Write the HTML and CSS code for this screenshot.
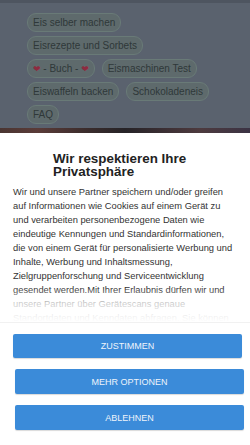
FILE: index.html
```html
<!DOCTYPE html>
<html lang="de">
<head>
<meta charset="utf-8">
<title>Eis</title>
<link rel="stylesheet" href="styles.css">
</head>
<body>
<div class="topband"></div>
<nav class="tags">
  <span class="tag">Eis selber machen</span>
  <span class="tag">Eisrezepte und Sorbets</span>
  <span class="tag"><span class="heart">❤</span> - Buch - <span class="heart">❤</span></span>
  <span class="tag">Eismaschinen Test</span>
  <span class="tag">Eiswaffeln backen</span>
  <span class="tag">Schokoladeneis</span>
  <span class="tag">FAQ</span>
</nav>
<div class="strip"></div>
<section class="dialog">
  <h1 class="title">Wir respektieren Ihre Privatsphäre</h1>
  <div class="scroll">
    <p class="text">Wir und unsere Partner speichern und/oder greifen auf Informationen wie Cookies auf einem Gerät zu und verarbeiten personenbezogene Daten wie eindeutige Kennungen und Standardinformationen, die von einem Gerät für personalisierte Werbung und Inhalte, Werbung und Inhaltsmessung, Zielgruppenforschung und Serviceentwicklung gesendet werden.Mit Ihrer Erlaubnis dürfen wir und unsere Partner über Gerätescans genaue Standortdaten und Kenndaten abfragen. Sie können Ihre Einwilligung jederzeit widerrufen.</p>
    <div class="fade"></div>
  </div>
  <div class="actions">
    <button class="btn btn-first">ZUSTIMMEN</button>
    <button class="btn">MEHR OPTIONEN</button>
    <button class="btn">ABLEHNEN</button>
  </div>
</section>
</body>
</html>
```
FILE: styles.css
```css
html, body {
  margin: 0;
  padding: 0;
}
body {
  background: #5a626e;
  font-family: "Liberation Sans", Arial, sans-serif;
  width: 250px;
  height: 445px;
  overflow: hidden;
}
.topband {
  height: 3px;
  background: #4e5560;
}
.tags {
  display: flex;
  flex-wrap: wrap;
  column-gap: 7px;
  row-gap: 4px;
  padding: 10px 38px 0 27px;
  height: 125px;
  box-sizing: border-box;
  align-content: flex-start;
}
.tag {
  display: inline-block;
  height: 19px;
  line-height: 17px;
  box-sizing: border-box;
  padding: 0 5px;
  border: 1px solid #697a77;
  border-radius: 9px;
  background: #5e6a6c;
  color: #2f3839;
  font-size: 10px;
  white-space: nowrap;
}
.heart {
  color: #8e2b3f;
  font-family: "DejaVu Sans", sans-serif;
  font-size: 9px;
}
.strip {
  height: 5px;
  background: linear-gradient(90deg, #4a3532 0%, #5a3b38 15%, #3a2c2c 35%, #262327 50%, #3a2e33 65%, #4d3a3e 80%, #3b3344 100%);
}
.dialog {
  background: #ffffff;
  height: 312px;
  box-sizing: border-box;
  padding-top: 20px;
}
.title {
  margin: 0;
  padding: 0 20px 0 53px;
  font-size: 13.4px;
  line-height: 12.5px;
  font-weight: bold;
  color: #222222;
}
.scroll {
  position: relative;
  margin-top: 7px;
  height: 137px;
  overflow: hidden;
  padding: 0 13px;
}
.text {
  margin: 0;
  font-size: 9.33px;
  line-height: 14px;
  color: #333333;
}
.fade {
  position: absolute;
  left: 0;
  right: 0;
  bottom: 0;
  height: 34px;
  background: linear-gradient(180deg, rgba(255,255,255,0) 0%, rgba(255,255,255,0.75) 45%, #ffffff 100%);
}
.actions {
  border-top: 1px solid #f1f1f1;
  box-shadow: 0 -1px 2px rgba(0,0,0,0.04);
  padding: 11px 6px 0 13px;
  display: flex;
  flex-direction: column;
  gap: 11px;
}
.btn {
  display: block;
  width: 229px;
  height: 25px;
  margin: 0 0 0 2px;
  border: 0;
  border-radius: 2px;
  background: #3b8bd9;
  color: #eef4fb;
  font-family: "Liberation Sans", Arial, sans-serif;
  font-size: 9px;
  padding: 0;
  box-shadow: 0 1px 1px rgba(0,0,0,0.15);
}
.btn-first {
  margin-left: 0;
  height: 24px;
}
```
